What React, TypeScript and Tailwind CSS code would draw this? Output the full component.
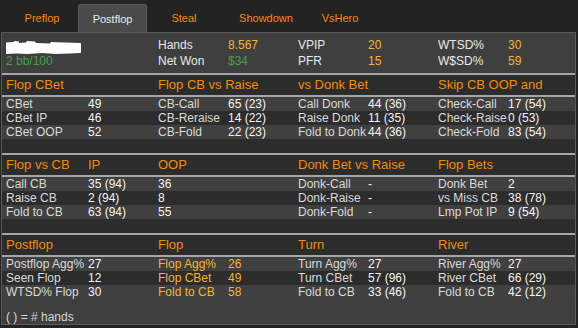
import React from "react";

type Cell = { l: string; v?: string; y?: boolean };
type Section = { head: Cell[]; rows: Cell[][] };

const tabs = [
  { name: "Preflop", w: "w-[68px]" },
  { name: "Postflop", w: "w-[69px]", active: true },
  { name: "Steal", w: "w-[70px]" },
  { name: "Showdown", w: "w-[90px]" },
  { name: "VsHero", w: "w-[54px]" },
];

const sections: Section[] = [
  {
    head: [{ l: "Flop CBet" }, { l: "Flop CB vs Raise" }, { l: "vs Donk Bet" }, { l: "Skip CB OOP and" }],
    rows: [
      [{ l: "CBet", v: "49" }, { l: "CB-Call", v: "65 (23)" }, { l: "Call Donk", v: "44 (36)" }, { l: "Check-Call", v: "17 (54)" }],
      [{ l: "CBet IP", v: "46" }, { l: "CB-Reraise", v: "14 (22)" }, { l: "Raise Donk", v: "11 (35)" }, { l: "Check-Raise", v: "0 (53)" }],
      [{ l: "CBet OOP", v: "52" }, { l: "CB-Fold", v: "22 (23)" }, { l: "Fold to Donk", v: "44 (36)" }, { l: "Check-Fold", v: "83 (54)" }],
    ],
  },
  {
    head: [{ l: "Flop vs CB", v: "IP" }, { l: "OOP" }, { l: "Donk Bet vs Raise" }, { l: "Flop Bets" }],
    rows: [
      [{ l: "Call CB", v: "35 (94)" }, { l: "", v: "36" }, { l: "Donk-Call", v: "-" }, { l: "Donk Bet", v: "2" }],
      [{ l: "Raise CB", v: "2 (94)" }, { l: "", v: "8" }, { l: "Donk-Raise", v: "-" }, { l: "vs Miss CB", v: "38 (78)" }],
      [{ l: "Fold to CB", v: "63 (94)" }, { l: "", v: "55" }, { l: "Donk-Fold", v: "-" }, { l: "Lmp Pot IP", v: "9 (54)" }],
    ],
  },
  {
    head: [{ l: "Postflop" }, { l: "Flop" }, { l: "Turn" }, { l: "River" }],
    rows: [
      [{ l: "Postflop Agg%", v: "27" }, { l: "Flop Agg%", v: "26", y: true }, { l: "Turn Agg%", v: "27" }, { l: "River Agg%", v: "27" }],
      [{ l: "Seen Flop", v: "12" }, { l: "Flop CBet", v: "49", y: true }, { l: "Turn CBet", v: "57 (96)" }, { l: "River CBet", v: "66 (29)" }],
      [{ l: "WTSD% Flop", v: "30" }, { l: "Fold to CB", v: "58", y: true }, { l: "Fold to CB", v: "33 (46)" }, { l: "Fold to CB", v: "42 (12)" }],
    ],
  },
];

function DataRow({ cells, light }: { cells: Cell[]; light: boolean }) {
  return (
    <div
      className={`grid grid-cols-[152px_140px_140px_1fr] pl-[4px] h-[14px] leading-[14px] text-[12px] ${
        light ? "bg-[#404040]" : "bg-[#2c2c2c]"
      }`}
    >
      {cells.map((c, i) => (
        <div key={i} className="flex whitespace-nowrap">
          {c.l !== "" && (
            <span
              className={`shrink-0 ${i === 0 ? "min-w-[82px]" : "min-w-[70px]"} ${
                c.y ? "text-[#f2b431]" : "text-[#dadada]"
              }`}
            >
              {c.l}
            </span>
          )}
          <span className={c.y ? "text-[#f2b431]" : "text-[#f4f4f4]"}>{c.v}</span>
        </div>
      ))}
    </div>
  );
}

function StatSection({ s, last }: { s: Section; last?: boolean }) {
  return (
    <div className="bg-[#2c2c2c]">
      <div className="h-[2px] bg-[#a6a6a6]" />
      <div className="grid grid-cols-[152px_140px_140px_1fr] pl-[4px] h-[20px] leading-[20px] text-[13px] text-[#f38a0e]">
        {s.head.map((c, i) => (
          <div key={i} className="flex whitespace-nowrap">
            <span className={i === 0 ? "min-w-[82px]" : "min-w-[70px]"}>{c.l}</span>
            {c.v && <span>{c.v}</span>}
          </div>
        ))}
      </div>
      <div className="h-[2px] bg-[#a6a6a6]" />
      {s.rows.map((r, i) => (
        <DataRow key={i} cells={r} light={i % 2 === 0} />
      ))}
      {!last && <div className="h-[14px]" />}
    </div>
  );
}

// redacted player name: white smudge
function NameBlob() {
  return (
    <svg width="76" height="13" viewBox="0 0 76 13" className="block">
      <path
        d="M0 1.5 L8 1 L8 0 L13 0.5 L13 2 L20 1.5 L21 0 L29 0.5 L30 2 L44 2.5 L45 1 L58 1.5 L75 2 L75 12 L63 12.5 L50 13 L36 12 L22 13 L10 12.5 L0 13 Z"
        fill="#ffffff"
      />
    </svg>
  );
}

export default function App() {
  return (
    <div className="w-[578px] h-[328px] bg-[#232323] font-['Liberation_Sans',Arial,sans-serif] overflow-hidden">
      <div className="flex gap-[2px] pl-[8px] pt-[4px] h-[32px]">
        {tabs.map((t) => (
          <div
            key={t.name}
            className={`${t.w} flex items-center justify-center text-[11px] pt-[1px] ${
              t.active
                ? "bg-[#4a4a4a] rounded-t-[3px] border-t border-x border-[#5c5c5c] text-[#ececec]"
                : "text-[#f58a12]"
            }`}
          >
            {t.name}
          </div>
        ))}
      </div>

      <div className="ml-[1px] w-[575px] h-[293px] border border-[#5a5a5a] bg-[#3f3f3f] flex flex-col">
        <div className="grid grid-cols-[152px_140px_140px_1fr] pl-[4px] pt-[4px] h-[40px] text-[12px] leading-[16px]">
          <div className="flex flex-col">
            <div className="h-[16px] pt-[4px]">
              <NameBlob />
            </div>
            <span className="text-[#47a047]">2 bb/100</span>
          </div>
          <div className="flex flex-col">
            <div className="flex">
              <span className="min-w-[70px] text-[#e8e8e8]">Hands</span>
              <span className="text-[#f2b431]">8.567</span>
            </div>
            <div className="flex">
              <span className="min-w-[70px] text-[#e8e8e8]">Net Won</span>
              <span className="text-[#47a047]">$34</span>
            </div>
          </div>
          <div className="flex flex-col">
            <div className="flex">
              <span className="min-w-[70px] text-[#e8e8e8]">VPIP</span>
              <span className="text-[#f2b431]">20</span>
            </div>
            <div className="flex">
              <span className="min-w-[70px] text-[#e8e8e8]">PFR</span>
              <span className="text-[#f2b431]">15</span>
            </div>
          </div>
          <div className="flex flex-col">
            <div className="flex">
              <span className="min-w-[70px] text-[#e8e8e8]">WTSD%</span>
              <span className="text-[#f2b431]">30</span>
            </div>
            <div className="flex">
              <span className="min-w-[70px] text-[#e8e8e8]">W$SD%</span>
              <span className="text-[#f2b431]">59</span>
            </div>
          </div>
        </div>

        {sections.map((s, i) => (
          <StatSection key={i} s={s} last={i === sections.length - 1} />
        ))}

        <div className="flex-1 flex items-end pl-[4px] text-[12px] leading-[14px] text-[#d6d6d6]">
          ( ) = # hands
        </div>
      </div>
    </div>
  );
}
